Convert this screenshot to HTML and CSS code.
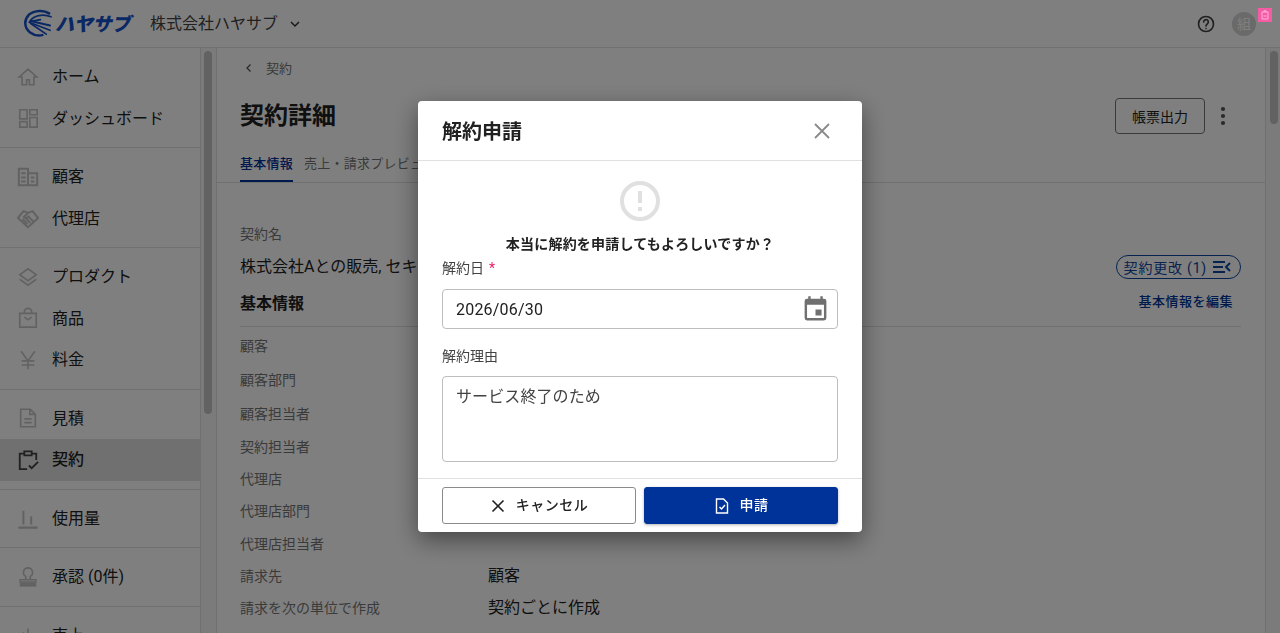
FILE: index.html
```html
<!DOCTYPE html>
<html lang="ja">
<head>
<meta charset="utf-8">
<title>解約申請</title>
<link rel="stylesheet" href="styles.css">
</head>
<body>
<div class="app">
  <header class="topbar">
    <div class="logo">
      <svg class="logo-mark" viewBox="0 0 30 30" fill="none" stroke="#1550c8" stroke-linecap="round">
        <path d="M27 4.500C22 1 12 1 6 6C1 11 1 19 7 24C11 27 16 28 20 27" stroke-width="2.600"/>
        <path d="M29 8C20 4.500 11 7 7 13L18 11" stroke-width="1.800"/>
        <path d="M7 14L28 22" stroke-width="1.800"/>
        <path d="M8 15L24 26" stroke-width="1.800"/>
        <path d="M10 13L28 17" stroke-width="2"/>
      </svg>
      <span class="logo-text">ハヤサブ</span>
    </div>
    <span class="company">株式会社ハヤサブ</span>
    <svg class="chev" viewBox="0 0 12 12" fill="none" stroke="#333" stroke-width="1.500"><path d="M2 4l4 4 4-4"/></svg>
    <span class="spacer"></span>
    <svg class="help" viewBox="0 0 24 24" fill="none" stroke="#424242" stroke-width="2">
      <circle cx="12" cy="12" r="9"/>
      <path d="M9.200 9.500a2.800 2.800 0 1 1 4.500 2.200c-1.100.8-1.700 1.400-1.700 2.800" stroke-linecap="round"/>
      <circle cx="12" cy="17.500" r=".6" stroke-width="1"/>
    </svg>
    <div class="avatar">組
      <span class="badge">
        <svg viewBox="0 0 14 14" fill="none" stroke="#ffb3d8" stroke-width="1"><path d="M4 4h6v7H4zM6 4V2.800h2V4M5.500 8h3"/></svg>
      </span>
    </div>
  </header>
  <div class="workspace">
    <nav class="sidebar">
      <div class="group">
        <a class="item"><svg class="ico" viewBox="0 0 24 24"><path d="M12 3.500L2.500 12h3v8.500h5v-5.500h3v5.500h5V12h3z"/></svg>ホーム</a>
        <a class="item"><svg class="ico" viewBox="0 0 24 24"><path d="M3 3h8v10H3zM14 3h8v5.500h-8zM14 11.500h8V22h-8zM3 16h8v6H3z"/></svg>ダッシュボード</a>
      </div>
      <div class="group">
        <a class="item"><svg class="ico ico-thick" viewBox="0 0 24 24"><path d="M2 3h10v18H2zM12 8h10v13H12zM4.500 8h5M4.500 12.500h5M4.500 17h5M15 12.500h4M15 17h4"/></svg>顧客</a>
        <a class="item"><svg class="ico ico-thick" viewBox="0 0 24 24"><path d="M7 4.500L12 6.500l5-2 6 7.500-11 10L1 12zM12 6.500L7.500 11c1.500 1.500 3.500 1 5-.5l6 6M6 13l5.500 5.500M9 11.500l5.500 6"/></svg>代理店</a>
      </div>
      <div class="group">
        <a class="item"><svg class="ico" viewBox="0 0 24 24"><path d="M12 3l9 6.500-9 6.500-9-6.500zM3 14.500l9 6.500 9-6.500"/></svg>プロダクト</a>
        <a class="item"><svg class="ico" viewBox="0 0 24 24"><path d="M3 7h18v15H3zM8 7V5.500a4 4 0 0 1 8 0V7M8 11l4 3 4-3"/></svg>商品</a>
        <a class="item"><svg class="ico" viewBox="0 0 24 24"><path d="M4.500 2.500L12 13l7.500-10.500M12 13v9M5 13h14M5 17.500h14"/></svg>料金</a>
      </div>
      <div class="group">
        <a class="item"><svg class="ico" viewBox="0 0 24 24"><path d="M4 2.500h10.500L20 8v13.500H4zM14 2.500V8h6M8 13h8M8 17h8"/></svg>見積</a>
        <a class="item active"><svg class="ico ico-dark" viewBox="0 0 24 24"><path d="M8 5H3v17h8M16 5h5v7M8 2.500h8V7H8zM13 18l3 3 7-7"/></svg>契約</a>
      </div>
      <div class="group">
        <a class="item"><svg class="ico ico-thick" viewBox="0 0 24 24"><path d="M1.500 22.500h21M7 4v15M15.500 10v9" /></svg>使用量</a>
      </div>
      <div class="group">
        <a class="item"><svg class="ico" viewBox="0 0 24 24"><path d="M12 2a5 5 0 0 0-2.500 9.300V15h5v-3.700A5 5 0 0 0 12 2zM3.500 15h17v2.500h-17z"/><path class="ico-fill" d="M3 18h18v4.500H3z"/></svg>承認 (0件)</a>
      </div>
      <div class="group">
        <a class="item"><svg class="ico" viewBox="0 0 24 24"><path d="M4 20h16M7 17V9M12 17V5M17 17v-6"/></svg>売上</a>
      </div>
    </nav>
    <div class="scrollbar side-scroll"><span class="thumb"></span></div>
    <main class="content">
      <div class="crumb">
        <svg class="crumb-chev" viewBox="0 0 10 10" fill="none" stroke="#555" stroke-width="1.300"><path d="M6.500 1.500L3 5l3.500 3.500"/></svg>
        <span>契約</span>
      </div>
      <div class="title-row">
        <h1>契約詳細</h1>
        <span class="spacer"></span>
        <button class="report">帳票出力</button>
        <svg class="more" viewBox="0 0 6 20" fill="#555"><circle cx="3" cy="3" r="2.100"/><circle cx="3" cy="10" r="2.100"/><circle cx="3" cy="17" r="2.100"/></svg>
      </div>
      <div class="tabs">
        <span class="tab current">基本情報</span>
        <span class="tab">売上・請求プレビュー</span>
      </div>
      <div class="summary">
        <div class="label name-label">契約名</div>
        <div class="name-row">
          <span class="name-value">株式会社Aとの販売, セキ</span>
          <span class="pill">契約更改 (1)
            <svg class="pill-ico" viewBox="0 0 18 14" fill="none" stroke="#0d47a1" stroke-width="2"><path d="M0 2h12M0 7h10M0 12h12M17 3l-4 4 4 4"/></svg>
          </span>
        </div>
      </div>
      <div class="section-head">
        <h2>基本情報</h2>
        <span class="edit">基本情報を編集</span>
      </div>
      <dl class="rows">
        <div class="row"><dt>顧客</dt><dd></dd></div>
        <div class="row"><dt>顧客部門</dt><dd></dd></div>
        <div class="row"><dt>顧客担当者</dt><dd></dd></div>
        <div class="row"><dt>契約担当者</dt><dd></dd></div>
        <div class="row"><dt>代理店</dt><dd></dd></div>
        <div class="row"><dt>代理店部門</dt><dd></dd></div>
        <div class="row"><dt>代理店担当者</dt><dd></dd></div>
        <div class="row"><dt>請求先</dt><dd>顧客</dd></div>
        <div class="row"><dt>請求を次の単位で作成</dt><dd>契約ごとに作成</dd></div>
      </dl>
    </main>
    <div class="scrollbar page-scroll"><span class="thumb"></span></div>
  </div>
</div>

<div class="overlay">
  <section class="modal">
    <div class="modal-head">
      <h3>解約申請</h3>
      <svg class="close" viewBox="0 0 24 24" fill="none" stroke="#8a8a8a" stroke-width="1.800"><path d="M5 5l14 14M19 5L5 19"/></svg>
    </div>
    <div class="modal-body">
      <svg class="warn" viewBox="0 0 40 40" fill="none" stroke="#e0e0e0" stroke-width="4">
        <circle cx="20" cy="20" r="18"/>
        <path d="M20 10v12M20 26v4"/>
      </svg>
      <p class="question">本当に解約を申請してもよろしいですか？</p>
      <label class="field-label">解約日<span class="req">*</span></label>
      <div class="input">
        <span>2026/06/30</span>
        <svg class="cal" viewBox="0 0 24 24" fill="#707070"><path d="M19 3h-1V1h-2v2H8V1H6v2H5a2 2 0 0 0-2 2v14a2 2 0 0 0 2 2h14a2 2 0 0 0 2-2V5a2 2 0 0 0-2-2zm0 16H5V8h14zM12 12h5v5h-5z"/></svg>
      </div>
      <label class="field-label reason-label">解約理由</label>
      <div class="textarea">サービス終了のため</div>
    </div>
    <div class="modal-foot">
      <button class="btn cancel">
        <svg class="btn-ico" viewBox="0 0 16 16" fill="none" stroke="#212121" stroke-width="1.600"><path d="M2.500 2.500l11 11M13.500 2.500l-11 11"/></svg>
        <span>キャンセル</span>
      </button>
      <button class="btn submit">
        <svg class="btn-ico" viewBox="0 0 16 16" fill="none" stroke="#fff" stroke-width="1.400"><path d="M2.500 1h7l4 4v10h-11zM5.500 9l2 2 3.500-4"/></svg>
        <span>申請</span>
      </button>
    </div>
  </section>
</div>
</body>
</html>
```
FILE: styles.css
```css
* { box-sizing: border-box; }
html, body { margin: 0; height: 100%; overflow: hidden; }
body {
  font-family: Roboto, "Noto Sans CJK JP", sans-serif;
  color: #212121;
  background: #fff;
  font-size: 14px;
}
.app { height: 633px; display: flex; flex-direction: column; }
.spacer { flex: 1; }

.topbar {
  height: 48px;
  flex: none;
  display: flex;
  align-items: center;
  padding: 0 0 0 23px;
  border-bottom: 1px solid #e0e0e0;
}
.logo { display: flex; align-items: center; width: 127px; }
.logo-mark { width: 29px; height: 29px; flex: none; }
.logo-text {
  font-size: 19px;
  font-weight: 900;
  font-style: italic;
  color: #1550c8;
  margin-left: 3px;
  padding-bottom: 2px;
  white-space: nowrap;
  letter-spacing: -.2px;
}
.company { font-size: 16px; color: #424242; padding-bottom: 3px; }
.chev { width: 12px; height: 12px; margin-left: 11px; }
.help { width: 20px; height: 20px; margin-right: 16px; }
.avatar {
  position: relative;
  width: 24px;
  height: 24px;
  margin-right: 24px;
  border-radius: 50%;
  background: #d4d4d4;
  color: #fff;
  font-size: 14px;
  line-height: 24px;
  text-align: center;
}
.badge {
  position: absolute;
  left: 26px;
  top: -4px;
  width: 14px;
  height: 14px;
  background: #f55ca6;
  z-index: 20;
  display: flex;
}

.workspace { flex: 1; display: flex; min-height: 0; overflow: hidden; }
.sidebar { width: 201px; flex: none; border-right: 1px solid #e0e0e0; }
.group { padding: 8px 0; border-bottom: 1px solid #e0e0e0; }
.item {
  height: 41.500px;
  display: flex;
  align-items: center;
  gap: 13px;
  padding: 0 0 3px 17px;
  font-size: 16px;
  color: #212121;
}
.item.active { background: #e0e0e0; font-weight: 500; }
.ico {
  width: 22px;
  height: 22px;
  margin-top: 3px;
  flex: none;
  fill: none;
  stroke: #c4c4c4;
  stroke-width: 1.800;
}
.ico-thick { stroke-width: 2.200; }
.ico-dark { stroke: #424242; stroke-width: 2; }
.ico-fill { fill: #c4c4c4; stroke: none; }

.scrollbar { width: 15px; flex: none; padding: 3px 3px; background: #f7f7f7; }
.side-scroll { border-right: 1px solid #e0e0e0; width: 16px; }
.page-scroll { border-left: 1px solid #e0e0e0; padding-left: 4px; }
.thumb { display: block; width: 8px; border-radius: 4px; background: #c4c4c4; }
.side-scroll .thumb { height: 363px; }
.page-scroll .thumb { height: 73px; }

.content { flex: 1; min-width: 0; padding: 0 24px 0 23px; overflow: hidden; }
.crumb {
  height: 43px;
  display: flex;
  align-items: center;
  gap: 12px;
  padding: 0 0 4px 4px;
  font-size: 13px;
  color: #757575;
}
.crumb-chev { width: 10px; height: 10px; }
.title-row { height: 49px; display: flex; align-items: center; }
h1 { margin: 0; padding-bottom: 4px; font-size: 24px; font-weight: 700; }
.report {
  width: 90px;
  height: 36px;
  margin-right: 15px;
  border: 1px solid #757575;
  border-radius: 4px;
  background: transparent;
  font: 400 14px Roboto, "Noto Sans CJK JP", sans-serif;
  color: #212121;
}
.more { width: 6px; height: 20px; margin-right: 15px; }
.tabs {
  height: 43px;
  margin: 0 -24px 0 -23px;
  padding: 0 0 0 23px;
  display: flex;
  gap: 11px;
  align-items: flex-end;
  border-bottom: 1px solid #e0e0e0;
}
.tab {
  height: 43px;
  padding-top: 14px;
  font-size: 13px;
  letter-spacing: .25px;
  color: #757575;
}
.tab.current { color: #003399; font-weight: 500; border-bottom: 2px solid #003399; }
.summary { padding-top: 41px; }
.label { color: #757575; }
.name-label { line-height: 20px; }
.name-row {
  height: 46px;
  display: flex;
  align-items: center;
  justify-content: space-between;
  font-size: 16px;
}
.name-value { white-space: nowrap; padding-bottom: 4px; }
.pill {
  height: 24px;
  padding: 0 9px 0 7px;
  border: 1px solid #0d47a1;
  border-radius: 12px;
  display: flex;
  align-items: center;
  gap: 6px;
  color: #0d47a1;
  font-size: 14px;
  letter-spacing: .8px;
  white-space: nowrap;
}
.pill-ico { width: 18px; height: 14px; }
.section-head {
  height: 37px;
  display: flex;
  justify-content: space-between;
  align-items: flex-start;
  border-bottom: 1px solid #e0e0e0;
}
h2 { margin: 0; padding-top: 1px; font-size: 16px; font-weight: 700; line-height: 26px; }
.edit { font-size: 13px; font-weight: 500; letter-spacing: .5px; color: #003399; line-height: 24px; padding-right: 8px; }
.rows { margin: 1px 0 0; }
.row { height: 32.200px; display: flex; align-items: center; }
.row:nth-child(-n+3) { height: 34px; }
dt { width: 248px; color: #757575; font-size: 14px; }
dd { margin: 0; padding-bottom: 2px; font-size: 16px; }

.overlay {
  position: fixed;
  inset: 0;
  z-index: 10;
  background: rgba(0, 0, 0, .5);
  display: flex;
  align-items: center;
  justify-content: center;
}
.modal {
  width: 444px;
  height: 431px;
  background: #fff;
  border-radius: 4px;
  box-shadow: 0 8px 24px rgba(0, 0, 0, .45);
  display: flex;
  flex-direction: column;
}
.modal-head {
  height: 60px;
  flex: none;
  padding: 0 28px 0 24px;
  display: flex;
  align-items: center;
  justify-content: space-between;
  border-bottom: 1px solid #e0e0e0;
}
h3 { margin: 0; font-size: 20px; font-weight: 700; }
.close { width: 24px; height: 24px; }
.modal-body {
  flex: 1;
  min-height: 0;
  padding: 20px 24px 0;
  display: flex;
  flex-direction: column;
}
.warn { width: 40px; height: 40px; align-self: center; flex: none; }
.question {
  margin: 13px 0 0;
  text-align: center;
  font-size: 14px;
  font-weight: 700;
  line-height: 20px;
  letter-spacing: .2px;
}
.field-label { display: block; font-size: 14px; line-height: 20px; margin-top: 4px; color: #424242; }
.req { color: #e91e63; margin-left: 5px; }
.input {
  height: 40px;
  margin-top: 11px;
  flex: none;
  padding: 0 7px 0 13px;
  border: 1px solid #bdbdbd;
  border-radius: 4px;
  display: flex;
  align-items: center;
  justify-content: space-between;
  font-size: 16px;
  letter-spacing: .2px;
}
.cal { width: 29px; height: 29px; }
.reason-label { margin-top: 17px; }
.textarea {
  height: 86px;
  margin-top: 10px;
  flex: none;
  padding: 8px 13px;
  border: 1px solid #bdbdbd;
  border-radius: 4px;
  font-size: 16px;
  line-height: 24px;
  letter-spacing: .1px;
  color: #424242;
}
.modal-foot {
  flex: none;
  height: 54px;
  padding: 8px 24px;
  display: flex;
  gap: 8px;
  border-top: 1px solid #e0e0e0;
}
.btn {
  flex: 1;
  height: 37px;
  padding: 0 0 3px;
  border-radius: 3px;
  display: flex;
  align-items: center;
  justify-content: center;
  gap: 10px;
  font: 500 14px Roboto, "Noto Sans CJK JP", sans-serif;
  letter-spacing: .5px;
}
.cancel { background: #fff; border: 1px solid #8a8a8a; color: #212121; }
.submit { background: #003399; border: 1px solid #003399; color: #fff; box-shadow: 0 1px 3px rgba(0, 0, 0, .3); }
.btn-ico { width: 16px; height: 16px; margin-top: 3px; }
```
